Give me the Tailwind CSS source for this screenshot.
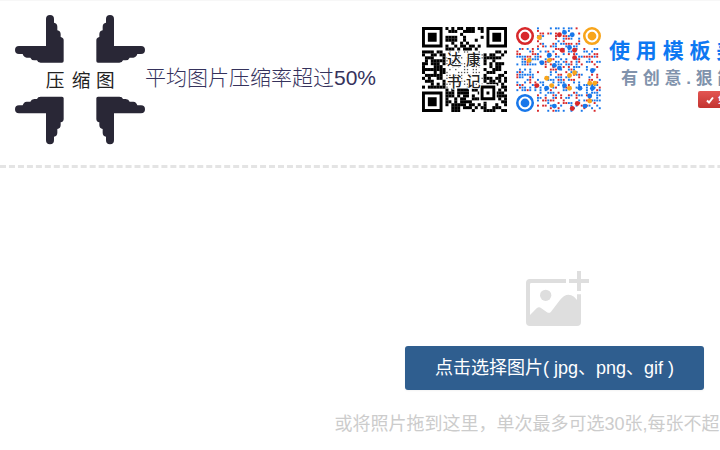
<!DOCTYPE html>
<html lang="zh-CN">
<head>
<meta charset="utf-8">
<title>压缩图</title>
<script src="https://cdn.jsdelivr.net/npm/@tailwindcss/browser@4"></script>
</head>
<body class="bg-white overflow-hidden font-['Liberation_Sans','Noto_Sans_CJK_SC',sans-serif]">
<div class="min-w-[1109px] border-t border-[#f7f7f7]">
  <header class="flex items-start pt-[14px] pl-[15px] pb-5">
    <a href="#" class="flex items-center text-[21px] leading-8 font-light text-[#35325c]">
      <svg class="w-[130px] h-[130px]" viewBox="45 45 390 390" role="img" aria-label="压缩图">
        <defs>
          <path id="arrow" fill="#292736" d="M138 138V57a12 12 0 0 1 24 0V68Q172 70 172 80V91Q182 93 182 103V111Q191 113 191 121V183q0 5-5 5H122Q113 188 111 181H103Q94 181 91 173H80Q71 172 68 162H57a12 12 0 0 1 0-24Z"/>
        </defs>
        <use href="#arrow"/>
        <use href="#arrow" transform="matrix(-1 0 0 1 480 0)"/>
        <use href="#arrow" transform="matrix(1 0 0 -1 0 478)"/>
        <use href="#arrow" transform="matrix(-1 0 0 -1 480 478)"/>
        <text y="260" font-size="56" font-weight="400" fill="#222" font-family="Noto Sans CJK SC, sans-serif"><tspan x="137">压</tspan><tspan x="215">缩</tspan><tspan x="288">图</tspan></text>
      </svg>
      <span class="pb-1">平均图片压缩率超过50%</span>
    </a>
    <a href="#" class="ml-[46px] mt-3 flex items-start">
      <svg id="qr-mono" class="w-[85px] h-[85px]" viewBox="0 0 29 29" role="img" aria-label="达康书记"></svg>
      <svg id="qr-color" class="ml-[9px] w-[85px] h-[85px]" viewBox="0 0 33 33" role="img" aria-label="二维码"></svg>
      <span class="ml-2 mt-2 flex flex-col whitespace-nowrap">
        <span class="text-[21px] leading-8 font-bold text-[#0d78f2]">使 用 模 板 美 化 二 维 码</span>
        <span class="pl-3 text-[17px] leading-6 font-bold text-[#8193ac]">有 创 意 . 狠 简 单</span>
        <span class="ml-[89px] w-20 h-[17px] flex items-center gap-1 pl-2 rounded-xs bg-linear-to-b from-[#e35552] to-[#c33330] text-[9px] leading-4 font-bold text-white">
          <svg class="w-2 h-2" viewBox="0 0 8 8" fill="none" stroke="#fff" stroke-width="2"><path d="M1 4.5 3 6.500 7 1.500"/></svg>免费美化
        </span>
      </span>
    </a>
  </header>
  <main class="border-t-3 border-dashed border-[#e4e4e4] pt-[103px] flex flex-col items-center gap-5 text-[18px]">
    <svg class="w-[70px] h-[55px]" viewBox="30 33 210 165" fill="#dedede" aria-hidden="true">
      <path d="M60 57H168V69H64q-4 0-4 4V165L80 145q7-6 14 0L111 157q7 4 12-2L150 120q20-26 42-10L201 120V103H213V186q0 12-12 12H60q-12 0-12-12V69q0-12 12-12Z"/>
      <circle cx="107" cy="106" r="17"/>
      <path d="M201 33h12V57h24V69H213V93H201V69H177V57H201Z"/>
    </svg>
    <button type="button" class="h-11 px-[30px] rounded-[3px] bg-[#2f5e8f] text-white shadow-xs">点击选择图片( jpg、png、gif )</button>
    <p class="leading-7 text-[#ccc]">或将照片拖到这里，单次最多可选30张,每张不超过5MB</p>
  </main>
</div>
<script>
  function random(seed) {
    return () => (seed = (seed * 16807) % 2147483647) / 2147483647;
  }
  function inFinder(x, y, n) {
    return (x < 8 && y < 8) || (x > n - 9 && y < 8) || (x < 8 && y > n - 9);
  }

  // Black code with the name printed in its lighter middle
  let r = random(4271), out = '';
  for (let y = 0; y < 29; y++) for (let x = 0; x < 29; x++) {
    if (inFinder(x, y, 29) || r() > 0.54) continue;
    const mid = x > 7 && x < 21 && y > 7 && y < 21;
    out += mid
      ? `<rect x="${x + 0.3}" y="${y + 0.3}" width=".45" height=".45" fill="#555"/>`
      : `<rect x="${x}" y="${y}" width="1.03" height="1.03"/>`;
  }
  for (const [x, y] of [[0, 0], [22, 0], [0, 22]])
    out += `<path fill-rule="evenodd" d="M${x} ${y}h7v7h-7zM${x + 1} ${y + 1}v5h5v-5zM${x + 2} ${y + 2}h3v3h-3z"/>`;
  out += '<path fill="#fff" d="M19.500 19.500h6v6h-6z"/><path fill-rule="evenodd" d="M20 20h5v5h-5zM21 21v3h3v-3zM22 22h1v1h-1z"/>';
  out += '<g font-family="Noto Sans CJK SC, sans-serif" font-size="5" font-weight="500" fill="#222" stroke="#fff" stroke-width=".5" paint-order="stroke"><text y="13"><tspan x="8.500">达</tspan><tspan x="15">康</tspan></text><text y="20.500"><tspan x="8.500">书</tspan><tspan x="15">记</tspan></text></g>';
  document.getElementById('qr-mono').innerHTML = out;

  // Coloured code: small squares with larger dots scattered over them
  const red = '#d8282b', blue = '#1877ea', amber = '#f8a51b';
  r = random(917); out = '';
  for (let y = 0; y < 33; y++) for (let x = 0; x < 33; x++) {
    if (inFinder(x, y, 33) || r() > 0.42) continue;
    out += `<rect x="${x + 0.15}" y="${y + 0.15}" width=".75" height=".75" fill="${r() < 0.4 ? red : blue}"/>`;
  }
  const dots = [[82,55,amber],[142,47,red],[157,40,blue],[180,47,blue],[150,93,red],[172,85,blue],[187,93,red],[187,115,red],[112,108,blue],[112,123,amber],[52,123,amber],[90,130,blue],[127,138,blue],[142,146,blue],[187,160,amber],[172,168,amber],[104,176,amber],[240,153,blue],[75,198,red],[104,206,blue],[119,198,amber],[157,198,blue],[172,206,amber],[203,206,blue],[232,191,amber],[247,191,amber],[240,206,blue],[232,229,blue],[232,244,amber],[195,251,red],[127,259,blue],[180,266,red],[218,259,blue]];
  for (const [x, y, c] of dots)
    out += `<circle cx="${(x - 13) / 7.65}" cy="${(y - 24) / 7.65}" r=".95" fill="${c}"/>`;
  for (const [x, y, c] of [[3.5, 3.5, red], [29.5, 3.5, amber], [3.5, 29.5, blue]])
    out += `<circle cx="${x}" cy="${y}" r="3" fill="#fff" stroke="${c}" stroke-width="1"/><circle cx="${x}" cy="${y}" r="1.7" fill="${c}"/>`;
  document.getElementById('qr-color').innerHTML = out;
</script>
</body>
</html>
